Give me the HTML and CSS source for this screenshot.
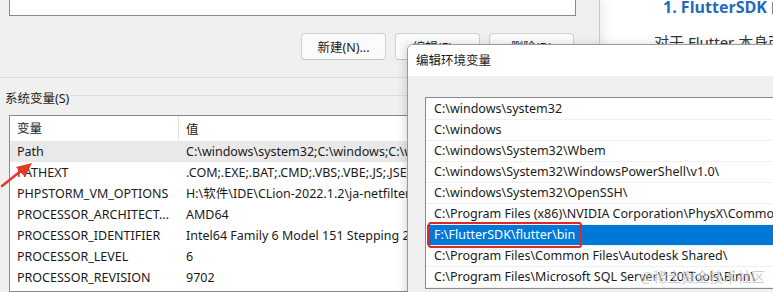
FILE: index.html
```html
<!DOCTYPE html>
<html lang="zh-CN">
<head>
    <meta charset="UTF-8">
    <title>环境变量</title>
    <link rel="stylesheet" href="styles.css">
</head>
<body>
    <div class="desk">
        <!-- 环境变量主窗口 -->
        <div class="win-main">
            <div class="user-list"></div>
            <div class="btn-row">
                <button type="button">新建(N)...</button>
                <button type="button">编辑(E)...</button>
                <button type="button">删除(D)</button>
            </div>
            <div class="sep"></div>
            <div class="group-title"><span>系统变量(S)</span><i></i></div>
            <div class="sys-list">
                <div class="sys-head">
                    <div class="c1">变量</div>
                    <div class="c2">值</div>
                </div>
                <div class="sys-row active"><div class="c1">Path</div><div class="c2">C:\windows\system32;C:\windows;C:\windows\System32\Wbem</div></div>
                <div class="sys-row"><div class="c1">PATHEXT</div><div class="c2">.COM;.EXE;.BAT;.CMD;.VBS;.VBE;.JS;.JSE;.WSF;.WSH;.MSC</div></div>
                <div class="sys-row"><div class="c1">PHPSTORM_VM_OPTIONS</div><div class="c2">H:\软件\IDE\CLion-2022.1.2\ja-netfilter-all\vmoptions</div></div>
                <div class="sys-row"><div class="c1">PROCESSOR_ARCHITECT...</div><div class="c2">AMD64</div></div>
                <div class="sys-row"><div class="c1">PROCESSOR_IDENTIFIER</div><div class="c2">Intel64 Family 6 Model 151 Stepping 2, GenuineIntel</div></div>
                <div class="sys-row"><div class="c1">PROCESSOR_LEVEL</div><div class="c2">6</div></div>
                <div class="sys-row"><div class="c1">PROCESSOR_REVISION</div><div class="c2">9702</div></div>
            </div>
        </div>

        <!-- 右侧文章 -->
        <div class="article">
            <h3 class="art-title">1. FlutterSDK 的配置</h3>
            <p class="art-text">对于 Flutter 本身而言</p>
        </div>

        <!-- 编辑环境变量对话框 -->
        <div class="win-edit">
            <div class="edit-title">编辑环境变量</div>
            <div class="edit-body">
                <div class="path-list">
                    <div class="path-row">C:\windows\system32</div>
                    <div class="path-row">C:\windows</div>
                    <div class="path-row">C:\windows\System32\Wbem</div>
                    <div class="path-row">C:\windows\System32\WindowsPowerShell\v1.0\</div>
                    <div class="path-row">C:\windows\System32\OpenSSH\</div>
                    <div class="path-row">C:\Program Files (x86)\NVIDIA Corporation\PhysX\Common</div>
                    <div class="path-row selected">F:\FlutterSDK\flutter\bin</div>
                    <div class="path-row">C:\Program Files\Common Files\Autodesk Shared\</div>
                    <div class="path-row">C:\Program Files\Microsoft SQL Server\120\Tools\Binn\</div>
                </div>
            </div>
        </div>

        <div class="mark-box"></div>
        <svg class="arrow" width="40" height="30" viewBox="0 0 40 30">
            <path d="M2 27 L22 11" stroke="#e5392b" stroke-width="2.6" stroke-linecap="round" fill="none"/>
            <polygon points="32,4 16,8 25,18" fill="#e5392b"/>
        </svg>
        <div class="watermark">@稀土掘金技术社区</div>
    </div>
</body>
</html>
```
FILE: styles.css
```css
* {
    padding: 0;
    margin: 0;
    box-sizing: border-box;
}

html,
body {
    width: 100%;
    height: 100%;
    overflow: hidden;
}

body {
    font-family: "Noto Sans", "Noto Sans CJK SC", sans-serif;
    font-size: 12.5px;
    color: #1a1a1a;
    background: #ffffff;
}

.desk {
    position: relative;
    width: 773px;
    height: 292px;
}

/* main window */
.win-main {
    position: absolute;
    left: 0;
    top: 0;
    width: 600px;
    height: 292px;
    background: #f0f0f0;
    border-right: 1px solid #c9c9c9;
    box-shadow: 4px 0 10px rgba(0, 0, 0, 0.08);
    display: flex;
    flex-direction: column;
}

.user-list {
    margin-left: 9px;
    width: 567px;
    height: 16px;
    background: #ffffff;
    border: 1px solid #8a8a8a;
    border-top: none;
}

.btn-row {
    display: flex;
    justify-content: flex-end;
    gap: 9px;
    margin-top: 17px;
    padding-right: 25px;
}

.btn-row button {
    width: 85px;
    height: 27px;
    background: #fbfbfb;
    border: 1px solid #d0d0d0;
    border-bottom-color: #c2c2c2;
    border-radius: 4px;
    font-family: "Noto Sans", "Noto Sans CJK SC", sans-serif;
    font-size: 12.5px;
    color: #1a1a1a;
}

.sep {
    margin-top: 17px;
    height: 1px;
    background: #dadada;
}

.group-title {
    display: flex;
    align-items: center;
    gap: 2px;
    margin-top: 8px;
    padding-left: 5px;
    height: 22px;
}

.group-title i {
    flex: 1;
    height: 1px;
    background: #dcdcdc;
    margin-top: -4px;
}

.sys-list {
    margin: 7px 0 0 9px;
    height: 177px;
    background: #ffffff;
    border: 1px solid #8a8a8a;
    border-right: none;
    overflow: hidden;
}

.sys-head,
.sys-row {
    display: flex;
    white-space: nowrap;
}

.sys-head {
    height: 25px;
    align-items: center;
}

.sys-head .c1 {
    border-right: 1px solid #e3e3e3;
    height: 25px;
    line-height: 25px;
}

.sys-row {
    height: 21px;
    line-height: 21px;
}

.sys-row.active {
    background: #e9e9e9;
}

.c1 {
    width: 169px;
    padding-left: 7px;
    flex-shrink: 0;
}

.c2 {
    padding-left: 7px;
}

/* right article */
.article {
    position: absolute;
    left: 620px;
    top: 0;
    width: 153px;
    height: 60px;
    overflow: hidden;
    white-space: nowrap;
}

.art-title {
    margin: -6px 0 0 43px;
    font-family: "Open Sans", "Noto Sans CJK SC", sans-serif;
    font-size: 16px;
    font-weight: 700;
    color: #1e6bb8;
}

.art-text {
    margin: 13px 0 0 34px;
    font-size: 15px;
    color: #333333;
}

/* edit dialog */
.win-edit {
    position: absolute;
    left: 407px;
    top: 44px;
    width: 380px;
    height: 260px;
    background: #f0f0f0;
    border: 1px solid #9a9a9a;
    border-radius: 6px 0 0 0;
    box-shadow: -2px 0 8px rgba(0, 0, 0, 0.15);
    overflow: hidden;
}

.edit-title {
    height: 31px;
    line-height: 31px;
    padding-left: 8px;
    background: #ffffff;
    font-size: 12.5px;
}

.edit-body {
    padding: 21px 0 0 17px;
}

.path-list {
    background: #ffffff;
    border: 1px solid #8a8a8a;
    border-right: none;
    white-space: nowrap;
    overflow: hidden;
    padding-top: 1px;
}

.path-row {
    height: 21px;
    line-height: 20px;
    padding-left: 8px;
    border-bottom: 1px solid #f0f0f0;
}

.path-row.selected {
    background: #0078d7;
    color: #ffffff;
    margin-left: 1px;
    padding-left: 7px;
}

/* annotations */
.mark-box {
    position: absolute;
    left: 428px;
    top: 222px;
    width: 154px;
    height: 26px;
    border: 2px solid #e3261f;
    border-radius: 3px;
}

.arrow {
    position: absolute;
    left: 0;
    top: 159px;
}

.watermark {
    position: absolute;
    left: 640px;
    top: 266px;
    font-family: "Noto Sans CJK SC", sans-serif;
    font-size: 14px;
    color: rgba(160, 160, 160, 0.55);
    text-shadow: 0 0 1px rgba(255, 255, 255, 0.8);
}
```
